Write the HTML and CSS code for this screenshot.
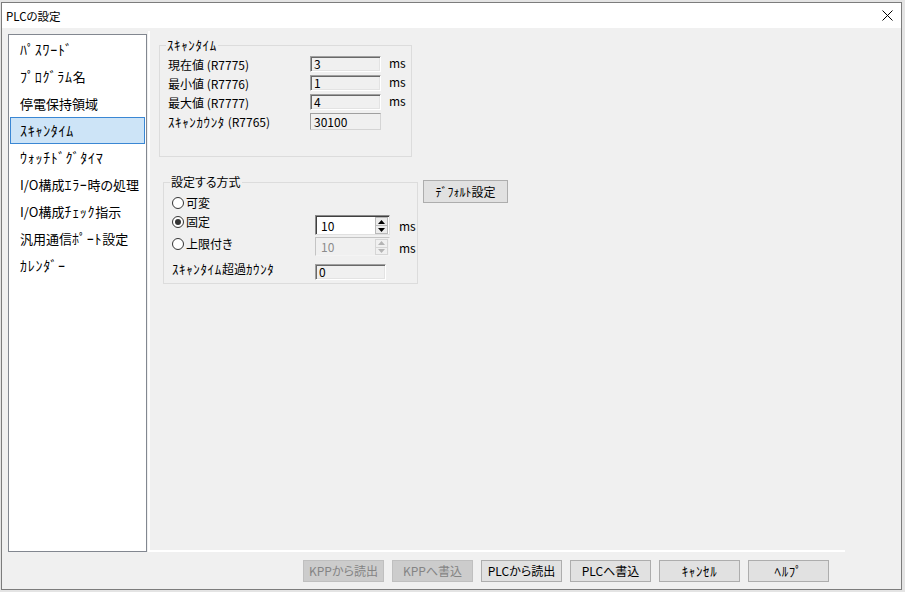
FILE: index.html
```html
<!DOCTYPE html>
<html lang="ja">
<head>
<meta charset="utf-8">
<title>PLCの設定</title>
<link rel="stylesheet" href="styles.css">
</head>
<body>
<div class="window">
  <div class="titlebar">
    <span class="title">PLCの設定</span>
    <svg class="close" viewBox="0 0 11 11" width="11" height="11"><path d="M0.5 0.5 L10.5 10.5 M10.5 0.5 L0.5 10.5" stroke="#000" stroke-width="1" fill="none"/></svg>
  </div>
  <div class="content">
    <ul class="nav">
      <li><span class="hk">ﾊﾟｽﾜｰﾄﾞ</span></li>
      <li><span class="hk">ﾌﾟﾛｸﾞﾗﾑ</span>名</li>
      <li>停電保持領域</li>
      <li class="sel"><span class="hk">ｽｷｬﾝﾀｲﾑ</span></li>
      <li><span class="hk">ｳｫｯﾁﾄﾞｸﾞﾀｲﾏ</span></li>
      <li>I/O構成<span class="hk">ｴﾗｰ</span>時の処理</li>
      <li>I/O構成<span class="hk">ﾁｪｯｸ</span>指示</li>
      <li>汎用通信<span class="hk">ﾎﾟｰﾄ</span>設定</li>
      <li><span class="hk">ｶﾚﾝﾀﾞｰ</span></li>
    </ul>
    <div class="main">
      <div class="panel">
        <div class="group scan">
          <div class="legend"><span class="hk">ｽｷｬﾝﾀｲﾑ</span></div>
          <div class="srow"><span class="slabel">現在値 (R7775)</span><span class="field">3</span><span class="unit">ms</span></div>
          <div class="srow"><span class="slabel">最小値 (R7776)</span><span class="field">1</span><span class="unit">ms</span></div>
          <div class="srow"><span class="slabel">最大値 (R7777)</span><span class="field">4</span><span class="unit">ms</span></div>
          <div class="srow tall"><span class="slabel"><span class="hk">ｽｷｬﾝｶｳﾝﾀ</span> (R7765)</span><span class="field plain">30100</span></div>
        </div>
        <div class="setrow">
          <div class="group method">
            <div class="legend">設定する方式</div>
            <div class="mrow r1">
              <span class="radio"><svg viewBox="0 0 12 12" width="12" height="12"><circle cx="6" cy="6" r="5.5" fill="#fff" stroke="#333"/></svg>可変</span>
            </div>
            <div class="mrow r2">
              <span class="radio"><svg viewBox="0 0 12 12" width="12" height="12"><circle cx="6" cy="6" r="5.5" fill="#fff" stroke="#333"/><circle cx="6" cy="6" r="3" fill="#333"/></svg>固定</span>
              <span class="spin">
                <span class="val">10</span>
                <span class="arrows">
                  <span class="arr"><svg viewBox="0 0 7 4" width="7" height="4"><path d="M3.5 0 L7 4 L0 4 Z" fill="#000"/></svg></span>
                  <span class="arr"><svg viewBox="0 0 7 4" width="7" height="4"><path d="M0 0 L7 0 L3.5 4 Z" fill="#000"/></svg></span>
                </span>
              </span>
              <span class="unit2">ms</span>
            </div>
            <div class="mrow r3">
              <span class="radio"><svg viewBox="0 0 12 12" width="12" height="12"><circle cx="6" cy="6" r="5.5" fill="#fff" stroke="#333"/></svg>上限付き</span>
              <span class="spin disabled">
                <span class="val">10</span>
                <span class="arrows">
                  <span class="arr"><svg viewBox="0 0 7 4" width="7" height="4"><path d="M3.5 0 L7 4 L0 4 Z" fill="#b4b4b4"/></svg></span>
                  <span class="arr"><svg viewBox="0 0 7 4" width="7" height="4"><path d="M0 0 L7 0 L3.5 4 Z" fill="#b4b4b4"/></svg></span>
                </span>
              </span>
              <span class="unit2">ms</span>
            </div>
            <div class="mrow r4">
              <span class="clabel"><span class="hk">ｽｷｬﾝﾀｲﾑ</span>超過<span class="hk">ｶｳﾝﾀ</span></span>
              <span class="field cfield">0</span>
            </div>
          </div>
          <button class="btn defbtn"><span class="hk">ﾃﾞﾌｫﾙﾄ</span>設定</button>
        </div>
      </div>
      <div class="actions">
        <button class="btn disabled">KPPから読出</button>
        <button class="btn disabled">KPPへ書込</button>
        <button class="btn">PLCから読出</button>
        <button class="btn">PLCへ書込</button>
        <button class="btn"><span class="hk">ｷｬﾝｾﾙ</span></button>
        <button class="btn"><span class="hk">ﾍﾙﾌﾟ</span></button>
      </div>
    </div>
  </div>
</div>
</body>
</html>
```

FILE: styles.css
```css
* { box-sizing: border-box; }
html, body { margin: 0; padding: 0; }
body {
  width: 905px;
  height: 592px;
  overflow: hidden;
  background: #e4e4e4;
  font-family: "Noto Sans CJK JP", "Noto Sans", sans-serif;
  font-size: 12px;
  color: #000;
  font-feature-settings: "palt";
}
.hk {
  font-feature-settings: normal;
  font-size: 1.08em;
  letter-spacing: 0.05em;
  line-height: 1;
}
.window {
  margin: 2px 0 0 1px;
  width: 901px;
  height: 588px;
  border: 1px solid #7c7c7c;
  background: #f0f0f0;
  display: flex;
  flex-direction: column;
}
.titlebar {
  flex: none;
  height: 25px;
  background: #fff;
  display: flex;
  align-items: center;
  justify-content: space-between;
  padding: 0 8px 0 4px;
}
.title { font-size: 11.5px; line-height: 16px; }
.close { display: block; }
.content {
  flex: 1;
  display: flex;
  align-items: flex-start;
  padding: 3px 0 0 6px;
}
.nav {
  list-style: none;
  margin: 3px 0 0 0;
  width: 139px;
  height: 518px;
  border: 1px solid #828790;
  background: #fff;
  padding: 1px 1px 0;
}
.nav li {
  height: 27px;
  border: 1px solid transparent;
  padding-left: 9px;
  font-size: 13px;
  line-height: 25px;
  white-space: nowrap;
}
.nav li.sel {
  background: #cde4f7;
  border-color: #3a87d4;
}
.main {
  width: 697px;
  margin-left: 1px;
  display: flex;
  flex-direction: column;
}
.panel {
  height: 521px;
  border-left: 2px solid #fff;
  border-bottom: 2px solid #fff;
  padding: 14px 0 0 9px;
}
.group {
  border: 1px solid #dcdcdc;
  padding-left: 8px;
}
.legend {
  display: block;
  width: max-content;
  margin: -9px 0 0 -2px;
  padding: 0 1px;
  background: #f0f0f0;
  line-height: 16px;
  height: 16px;
}
.scan { width: 253px; height: 112px; }
.srow {
  display: flex;
  align-items: center;
  height: 16px;
  margin-top: 3px;
}
.srow.tall { height: 17px; }
.slabel { width: 142px; white-space: nowrap; }
.field {
  width: 71px;
  height: 16px;
  border: 1px solid;
  border-color: #a0a0a0 #fff #fff #a0a0a0;
  box-shadow: inset 1px 1px 0 #696969, inset -1px -1px 0 #e3e3e3;
  padding-left: 3px;
  line-height: 14px;
  font-size: 12px;
}
.field.plain {
  height: 17px;
  border-color: #a0a0a0 #d4d4d4 #d4d4d4 #a0a0a0;
  box-shadow: none;
  line-height: 15px;
}
.unit {
  align-self: flex-start;
  margin-left: 8px;
  line-height: 13px;
}
.setrow {
  display: flex;
  align-items: flex-start;
  margin: 25px 0 0 4px;
}
.method { width: 255px; height: 102px; }
.mrow { display: flex; align-items: flex-start; }
.r1 { margin-top: 6px; height: 16px; }
.r2 { margin-top: 3px; height: 20px; }
.r3 { margin-top: 2px; height: 19px; }
.r4 { margin-top: 8px; height: 16px; }
.radio {
  width: 143px;
  height: 16px;
  margin-top: -1px;
  display: flex;
  align-items: center;
  line-height: 16px;
}
.radio svg { display: block; margin-right: 2px; }
.spin {
  width: 75px;
  height: 100%;
  display: flex;
  background: #fff;
  border: 1px solid;
  border-color: #8a8a8a #e0e0e0 #e0e0e0 #8a8a8a;
  box-shadow: inset 1px 1px 0 #404040;
}
.spin .val {
  flex: 1;
  display: flex;
  align-items: center;
  padding-left: 5px;
}
.spin .arrows {
  width: 13px;
  display: flex;
  flex-direction: column;
  margin: 1px 1px 0 0;
}
.arr {
  flex: 1;
  display: flex;
  align-items: center;
  justify-content: center;
  background: #ececec;
  border: 1px solid #b9b9b9;
}
.arr + .arr { border-top: none; }
.arr svg { display: block; }
.spin.disabled {
  background: #f0f0f0;
  border-color: #c4c4c4 #f4f4f4 #f4f4f4 #c4c4c4;
  box-shadow: none;
  color: #8c8c8c;
}
.spin.disabled .arr { background: #f0f0f0; border-color: #d6d6d6; }
.unit2 { margin: 3px 0 0 9px; line-height: 16px; }
.clabel {
  width: 143px;
  margin-top: -3px;
  line-height: 16px;
  height: 16px;
  white-space: nowrap;
}
.cfield { height: 16px; }
.btn {
  width: 81px;
  height: 22px;
  padding: 0;
  border: 1px solid #adadad;
  background: #e1e1e1;
  font-family: inherit;
  font-size: 12px;
  font-feature-settings: "palt";
  color: #000;
  line-height: 18px;
}
.btn.disabled {
  background: #cccccc;
  border-color: #bfbfbf;
  color: #848484;
}
.defbtn {
  margin: -2px 0 0 5px;
  width: 85px;
  height: 23px;
}
.defbtn .hk { letter-spacing: 0; font-size: 1em; }
.actions {
  display: flex;
  justify-content: flex-end;
  gap: 8px;
  margin-top: 8px;
  padding-right: 16px;
}
```
